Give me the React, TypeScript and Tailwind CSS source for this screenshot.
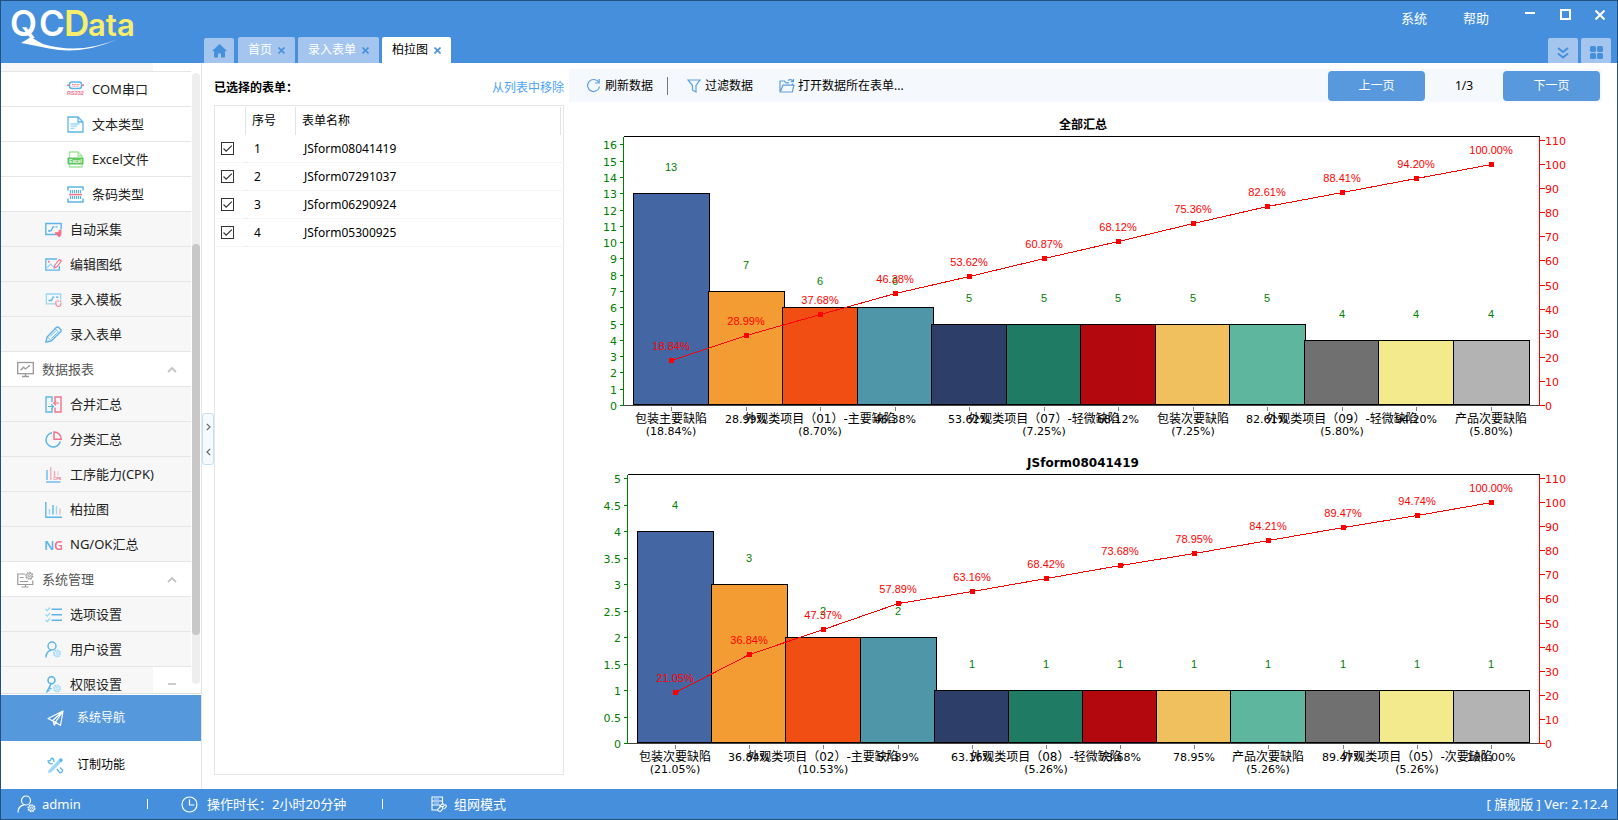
import React, { ReactNode } from "react";

const BLUE = "#5cb5ea";
const PINK = "#f4718c";
const LIGHT = "#9ad8fa";

function Icon({ size = 17, children }: { size?: number; children: ReactNode }) {
  return (
    <svg width={size} height={size} viewBox="0 0 17 17" fill="none" className="shrink-0" aria-hidden="true">
      {children}
    </svg>
  );
}

const Gear = ({ x, y, color }: { x: number; y: number; color: string }) => (
  <g stroke={color}>
    <circle cx={x} cy={y} r="3.4" strokeWidth="1.3" strokeDasharray="1.7 0.9" />
    <circle cx={x} cy={y} r="2.7" strokeWidth="0.8" />
    <circle cx={x} cy={y} r="1.1" strokeWidth="0.9" />
  </g>
);

const icons: Record<string, ReactNode> = {
  com: (
    <Icon>
      <rect x="2.500" y="1" width="12" height="6.500" rx="2.500" stroke={BLUE} strokeWidth="1.500" />
      <path d="M5 3.500h7.500M5.500 5.200h6.500" stroke={PINK} strokeDasharray="1 0.600" />
      <path d="M0 4.200h2M15 4.200h2" stroke={PINK} strokeWidth="1.500" />
      <text x="8.500" y="13.500" fontSize="5.500" fontWeight="700" textAnchor="middle" fill={PINK} fontFamily="Liberation Sans, sans-serif">RS232</text>
    </Icon>
  ),
  text: (
    <Icon>
      <path d="M1 1h10l5 5v10H1z" stroke={BLUE} strokeWidth="1.300" />
      <path d="M11 1v5h5" stroke={BLUE} strokeWidth="1.300" />
      <path d="M3.500 8h9M3.500 10.200h7M3.500 12.400h4" stroke={LIGHT} strokeWidth="1.300" />
    </Icon>
  ),
  excel: (
    <Icon>
      <path d="M2.500 7V1h8.500l4 4v2M2.500 13v3h12.500v-3" stroke="#a5e5a0" strokeWidth="1.300" />
      <path d="M11 1v4h4" stroke="#a5e5a0" strokeWidth="1.300" />
      <rect x="0.500" y="6.500" width="16" height="7" rx="0.800" fill="#5cc860" />
      <text x="8.500" y="11.800" fontSize="4.800" fontWeight="700" textAnchor="middle" fill="#fff" fontFamily="Liberation Sans, sans-serif">Excel</text>
    </Icon>
  ),
  barcode: (
    <Icon>
      <path d="M1 4.500V1h15v3.500M1 12.500V16h15v-3.500" stroke={BLUE} strokeWidth="1.500" />
      <path d="M3.500 4v3.200M5.500 4v3.200M7.500 4v3.200M9.500 4v3.200M11.500 4v3.200M13.500 4v3.200M3.500 10v3M5.500 10v3M7.500 10v3M9.500 10v3M11.500 10v3M13.500 10v3" stroke={BLUE} strokeWidth="1.200" />
      <path d="M2 8.600h13" stroke={PINK} strokeWidth="1.500" />
    </Icon>
  ),
  collect: (
    <Icon>
      <path d="M11 13.500H0.800V2.500h15.400v6" stroke={BLUE} strokeWidth="1.400" />
      <path d="M3.500 9.800h2.500l2-3.800h1.500M10.500 5.800h2" stroke={BLUE} strokeWidth="1.300" />
      <circle cx="4.200" cy="9.800" r="1.100" fill={BLUE} />
      <path d="M10.500 11.500h3l1-2.500 1.500 0 0 4.500-1.500 2.500-4-3z" fill={PINK} stroke={PINK} strokeWidth="0.800" />
    </Icon>
  ),
  edit: (
    <Icon>
      <path d="M12 3H0.800v11.200h13.500V10" stroke={BLUE} strokeWidth="1.300" />
      <path d="M2 12l3.500-4 3 3 2-1.500" stroke={LIGHT} strokeWidth="1.200" />
      <circle cx="3.800" cy="5.800" r="1" fill={PINK} />
      <path d="M9.500 9.500l4.800-6 2 1.500-4.500 6-2.600 1z" stroke={PINK} strokeWidth="1.100" />
    </Icon>
  ),
  template: (
    <Icon>
      <path d="M10.500 12.800H1.300V3h14.400v5.500" stroke={LIGHT} strokeWidth="1.300" />
      <path d="M3.500 9.500h3l1.500-3.300h1.500M11 6.200h2.500" stroke={BLUE} strokeWidth="1.300" />
      <path d="M11 11.500v-1.500M13 11V8.800M15.500 11V9.500M10.800 11.500c0 3 1.200 4 2.700 4s2.500-1 2.500-4" stroke={PINK} strokeWidth="1.200" opacity="0.800" />
    </Icon>
  ),
  pencil: (
    <Icon>
      <path d="M1 16l1-5L11.500 1.300h2L16 4v1.500L6 15z" stroke={BLUE} strokeWidth="1.400" />
      <path d="M2.500 11l3.500 3.500M10.500 3l4 4M5 10.500l6-6M6.500 12.500l6-6" stroke={BLUE} strokeWidth="0.900" />
    </Icon>
  ),
  report: (
    <Icon>
      <rect x="0.700" y="1.500" width="15.600" height="11.200" stroke="#999" strokeWidth="1.300" />
      <path d="M3.500 9.200l3-3 2 1.800 4.500-3.800M8.500 12.700v2.500M5 15.500h7" stroke="#999" strokeWidth="1.300" />
    </Icon>
  ),
  merge: (
    <Icon>
      <path d="M7 6V1H1v15h6v-4" stroke={BLUE} strokeWidth="1.400" />
      <path d="M10 5V1h6v15h-6v-4.500" stroke={PINK} strokeWidth="1.400" />
      <path d="M3 10.500h5M6.200 8.300l2.300 2.200-2.300 2.200" stroke={BLUE} strokeWidth="1.200" />
      <path d="M14 7H8.800M11 4.800L8.700 7 11 9.200" stroke={PINK} strokeWidth="1.200" />
    </Icon>
  ),
  pie: (
    <Icon>
      <path d="M7 1.800A7.200 7.200 0 1 0 15.300 10.500" stroke={BLUE} strokeWidth="1.500" />
      <path d="M9 0.900v7.300h7.200A7.300 7.300 0 0 0 9 0.900z" stroke={PINK} strokeWidth="1.500" />
    </Icon>
  ),
  cpk: (
    <Icon>
      <path d="M1 16h14.500" stroke={BLUE} strokeWidth="1.300" />
      <path d="M2 4v10" stroke={BLUE} strokeWidth="1.300" />
      <path d="M5.800 1v13M9.500 5v6" stroke={PINK} strokeWidth="1.300" opacity="0.600" />
      <path d="M13 5v5" stroke={PINK} opacity="0.400" />
      <text x="12.500" y="13.800" fontSize="4" fontWeight="700" textAnchor="middle" fill={PINK} fontFamily="Liberation Sans, sans-serif">CPK</text>
    </Icon>
  ),
  pareto: (
    <Icon>
      <path d="M0.800 1v15.200H17" stroke={BLUE} strokeWidth="1.400" />
      <path d="M4.500 8v5.500M11.500 5v8.500" stroke={LIGHT} strokeWidth="1.400" />
      <path d="M8 4v9.500" stroke={BLUE} strokeWidth="1.400" />
      <path d="M15 7.500v6" stroke={PINK} strokeWidth="1.400" opacity="0.500" />
    </Icon>
  ),
  ng: (
    <Icon>
      <g fontSize="13" fontWeight="600" fontFamily="Noto Sans, sans-serif">
        <text x="-1" y="13.500" fill={BLUE}>N</text>
        <text x="9" y="13.500" fill={PINK}>G</text>
      </g>
    </Icon>
  ),
  manage: (
    <Icon>
      <path d="M8 3H0.800v10.500h15V9.500M8.500 13.500v2M4.500 16h7M3 10.500h8M3 6.500h3.500" stroke="#999" strokeWidth="1.200" />
      <Gear x={12.3} y={4.8} color="#999" />
    </Icon>
  ),
  options: (
    <Icon>
      <path d="M6.500 3.300H17M6.500 8.700H17M6.500 14.200H17" stroke={BLUE} strokeWidth="1.600" />
      <path d="M0.500 3l1.700 1.600L5 1.500M0.500 8.500l1.700 1.600L5 7M0.500 14l1.700 1.600L5 12.500" stroke={LIGHT} strokeWidth="1.400" />
    </Icon>
  ),
  user: (
    <Icon>
      <circle cx="7" cy="5" r="4" stroke={BLUE} strokeWidth="1.400" />
      <path d="M1 16.500c0-4 2-6.500 5-7.300" stroke={BLUE} strokeWidth="1.400" />
      <Gear x={12} y={12.5} color={LIGHT} />
    </Icon>
  ),
  key: (
    <Icon>
      <circle cx="6.500" cy="4.200" r="3.500" stroke={BLUE} strokeWidth="1.600" />
      <path d="M6 8l-4.500 8.500M3.500 11.500l3 1.500M2.500 14l2 1" stroke={BLUE} strokeWidth="1.600" />
      <Gear x={12} y={12.5} color={LIGHT} />
    </Icon>
  ),
  plane: (
    <Icon>
      <path d="M16 1L1 8.500l4.500 2.300L16 1l-2.500 14.500-5-3.300L16 1M6 10.800l2.500 1.400-1 3.300M6 10.800l1.500 4.700" stroke="#fff" strokeWidth="1.200" strokeLinejoin="round" />
    </Icon>
  ),
  custom: (
    <Icon>
      <path d="M1.500 13.500L11.500 3l2.500 2.500L4 15.500l-3 .5z" fill={LIGHT} />
      <path d="M11.500 3l1.500-1.500c1-1 3.500 1 2.500 2.500L14 5.500z" fill={BLUE} />
      <path d="M4.500 1l-1 2.500L1 4c.5 2.500 3 3.500 4.800 2.500M4.500 1c1.800.5 2.700 2 2.300 4M10 12l2.500 3.500c1 .8 3.500-.5 3-2.500L13 10.500" stroke={BLUE} strokeWidth="1.300" />
    </Icon>
  ),
};

type NavRow = { icon: string; label: string; level: 0 | 1 | 2 };
const navRows: NavRow[] = [
  { icon: "com", label: "COM串口", level: 2 },
  { icon: "text", label: "文本类型", level: 2 },
  { icon: "excel", label: "Excel文件", level: 2 },
  { icon: "barcode", label: "条码类型", level: 2 },
  { icon: "collect", label: "自动采集", level: 1 },
  { icon: "edit", label: "编辑图纸", level: 1 },
  { icon: "template", label: "录入模板", level: 1 },
  { icon: "pencil", label: "录入表单", level: 1 },
  { icon: "report", label: "数据报表", level: 0 },
  { icon: "merge", label: "合并汇总", level: 1 },
  { icon: "pie", label: "分类汇总", level: 1 },
  { icon: "cpk", label: "工序能力(CPK)", level: 1 },
  { icon: "pareto", label: "柏拉图", level: 1 },
  { icon: "ng", label: "NG/OK汇总", level: 1 },
  { icon: "manage", label: "系统管理", level: 0 },
  { icon: "options", label: "选项设置", level: 1 },
  { icon: "user", label: "用户设置", level: 1 },
  { icon: "key", label: "权限设置", level: 1 },
];

const levelClass = {
  0: "bg-white pl-4 gap-2 text-[#555]",
  1: "bg-[#f7f7f7] pl-[44px] gap-2 text-[#222]",
  2: "bg-white pl-[66px] gap-2 text-[#222]",
};

function Sidebar() {
  return (
    <aside className="flex w-[201px] shrink-0 flex-col border-r border-[#e6e6e6] bg-white">
      <div className="flex min-h-0 flex-1 justify-between border-b border-[#e0e0e0]">
        <nav className="relative w-[190px] overflow-hidden">
          <div className="h-[9px] border-b border-[#e6e6e6]">
            <div className="h-2 w-[152px] bg-[#f7f7f7]" />
          </div>
          {navRows.map((row) => (
            <button
              key={row.label}
              type="button"
              className={`flex h-[35px] w-full items-center border-b border-[#e6e6e6] pt-px text-[13px] ${levelClass[row.level]}`}
            >
              {icons[row.icon]}
              <span>{row.label}</span>
              {row.level === 0 && (
                <svg width="10" height="7" viewBox="0 0 10 7" fill="none" className="mr-[14px] ml-auto" aria-hidden="true">
                  <path d="M1 6l4-4 4 4" stroke="#c4c4c4" strokeWidth="1.800" />
                </svg>
              )}
            </button>
          ))}
          <div className="absolute right-0 bottom-0 flex h-[26px] w-[38px] justify-center bg-white pt-4">
            <span className="h-[2px] w-2 bg-[#ccc]" />
          </div>
        </nav>
        <div className="mt-[10px] mr-[1px] mb-[9px] flex w-2 flex-col rounded-full bg-[#eeeeee]">
          <div className="h-[28%]" />
          <div className="h-[64%] rounded-full bg-[#c8c8c8]" />
        </div>
      </div>
      <button type="button" className="mt-px flex h-[46px] items-center gap-[13px] bg-[#5598dc] pl-[46px] text-xs text-white">
        {icons.plane}
        系统导航
      </button>
      <button type="button" className="flex h-12 items-center gap-[13px] pl-[46px] text-xs text-black">
        {icons.custom}
        订制功能
      </button>
    </aside>
  );
}

function Logo() {
  return (
    <svg width="140" height="54" viewBox="0 0 140 54" role="img" aria-label="QCData" className="shrink-0">
      <g fontFamily="Inter, Roboto, sans-serif" fontWeight="600">
        <g fill="#fff" fontSize="35">
          <text x="9" y="35">Q</text>
          <text x="38" y="35">C</text>
        </g>
        <g fill="#f8ee6c">
          <text x="63" y="35" fontSize="35">D</text>
          <text x="87" y="35" fontSize="31">ata</text>
        </g>
      </g>
      <path d="M20 42L30 36Q36 40 42 43Q78 54 117 38Q82 54 48 47.500Q30 43.500 20 42z" fill="#fff" />
    </svg>
  );
}

function CloseX() {
  return (
    <svg width="7" height="7" viewBox="0 0 7 7" fill="none" aria-hidden="true">
      <path d="M0.500 0.500l6 6M6.500 0.500l-6 6" stroke="#4a90dc" strokeWidth="1.600" />
    </svg>
  );
}

function Tab({ label, active = false }: { label: string; active?: boolean }) {
  return (
    <div
      className={`flex h-[26px] items-center gap-[6px] rounded-t-[2px] px-[10px] text-xs ${
        active ? "bg-white text-black" : "bg-[#a4c6ee] text-white"
      }`}
    >
      <button type="button">{label}</button>
      <button type="button" aria-label={`关闭${label}`}>
        <CloseX />
      </button>
    </div>
  );
}

function Header() {
  return (
    <header className="flex h-[62px] shrink-0 items-stretch bg-[#468fdc]">
      <div className="w-[203px] shrink-0">
        <Logo />
      </div>
      <div className="flex items-end gap-[3px]">
        <button type="button" aria-label="主页" className="mr-px flex h-[25px] w-[30px] items-center justify-center rounded-t-[2px] bg-[#a4c6ee]">
          <svg width="15" height="14" viewBox="0 0 15 14" aria-hidden="true">
            <path d="M7.500 0L0 7h2v5.500q0 1 1 1h3V9.500h3v4h3q1 0 1-1V7h2z" fill="#468fdc" />
          </svg>
        </button>
        <Tab label="首页" />
        <Tab label="录入表单" />
        <Tab label="柏拉图" active />
      </div>
      <div className="ml-auto flex flex-col justify-between">
        <div className="flex items-center pt-2 pr-3 text-[13px] text-white">
          <button type="button" className="mr-9">系统</button>
          <button type="button" className="mr-9">帮助</button>
          <button type="button" aria-label="最小化" className="mr-[25px] pb-3">
            <svg width="10" height="2" viewBox="0 0 10 2" className="block" aria-hidden="true"><rect width="10" height="2" fill="#fff" /></svg>
          </button>
          <button type="button" aria-label="最大化" className="mr-6 pb-2">
            <svg width="11" height="11" viewBox="0 0 11 11" fill="none" aria-hidden="true"><rect x="1" y="1" width="9" height="9" stroke="#fff" strokeWidth="2" /></svg>
          </button>
          <button type="button" aria-label="关闭" className="pb-2">
            <svg width="10" height="10" viewBox="0 0 10 10" aria-hidden="true"><path d="M0.500 0.500l9 9M9.500 0.500l-9 9" stroke="#fff" strokeWidth="2" /></svg>
          </button>
        </div>
        <div className="flex justify-end gap-[3px] pr-[6px]">
          <button type="button" aria-label="展开" className="flex h-[25px] w-[30px] items-center justify-center rounded-t-[2px] bg-[#a4c6ee]">
            <svg width="12" height="12" viewBox="0 0 12 12" fill="none" className="mt-1" aria-hidden="true">
              <path d="M1 1l5 4 5-4M1 6.500l5 4 5-4" stroke="#468fdc" strokeWidth="2" />
            </svg>
          </button>
          <button type="button" aria-label="网格" className="flex h-[25px] w-[30px] items-center justify-center rounded-t-[2px] bg-[#a4c6ee]">
            <svg width="13" height="13" viewBox="0 0 13 13" fill="#468fdc" className="mt-1" aria-hidden="true">
              <rect width="6" height="6" rx="1.500" /><rect x="7" width="6" height="6" rx="1.500" />
              <rect y="7" width="6" height="6" rx="1.500" /><rect x="7" y="7" width="6" height="6" rx="1.500" />
            </svg>
          </button>
        </div>
      </div>
    </header>
  );
}

const forms = ["JSform08041419", "JSform07291037", "JSform06290924", "JSform05300925"];

function FormPanel() {
  return (
    <section className="relative flex w-[367px] shrink-0 flex-col pr-[5px] pb-[14px] pl-3">
      <div className="flex h-[42px] shrink-0 items-center justify-between pt-2 text-xs">
        <h2 className="font-bold text-black">已选择的表单：</h2>
        <a href="#remove" className="text-[#4ba3f7]">从列表中移除</a>
      </div>
      <div className="flex-1 border border-[#e6e6e6] px-[2px] pt-px">
        <table className="w-full table-fixed border-separate border-spacing-0 text-left text-xs text-black">
          <thead>
            <tr className="h-7">
              <th className="w-[29px] border-r border-[#e3e3e3]" aria-label="选择" />
              <th className="w-[50px] border-r border-[#e3e3e3] pl-[6px] font-normal">序号</th>
              <th className="border-r border-[#e3e3e3] pl-[6px] font-normal">表单名称</th>
            </tr>
          </thead>
          <tbody>
            {forms.map((name, i) => (
              <tr key={name} className="h-7">
                <td className="border-b border-dotted border-[#ebebeb] pl-1">
                  <label className="grid h-[13px] w-[13px]">
                    <input
                      type="checkbox"
                      defaultChecked
                      aria-label={name}
                      className="peer m-0 h-[13px] w-[13px] appearance-none border border-[#333] bg-white [grid-area:1/1]"
                    />
                    <svg width="13" height="13" viewBox="0 0 13 13" fill="none" className="pointer-events-none hidden peer-checked:block [grid-area:1/1]" aria-hidden="true">
                      <path d="M2.500 6.500L5.200 9.200L10.800 3.600" stroke="#333" strokeWidth="1.200" />
                    </svg>
                  </label>
                </td>
                <td className="border-b border-dotted border-[#ebebeb] pl-2">{i + 1}</td>
                <td className="border-b border-dotted border-[#ebebeb] pl-2">{name}</td>
              </tr>
            ))}
          </tbody>
        </table>
      </div>
      <button
        type="button"
        aria-label="折叠面板"
        className="absolute top-[350px] left-0 flex h-[52px] w-3 flex-col items-center justify-around rounded-[3px] border border-[#c3e1f6] bg-[#f5faff]"
      >
        <svg width="5" height="8" viewBox="0 0 5 8" fill="none" aria-hidden="true"><path d="M0.800 0.800L4 4L0.800 7.200" stroke="#666" strokeWidth="1.200" /></svg>
        <svg width="5" height="8" viewBox="0 0 5 8" fill="none" aria-hidden="true"><path d="M4.200 0.800L1 4l3.200 3.200" stroke="#666" strokeWidth="1.200" /></svg>
      </button>
    </section>
  );
}

function Toolbar() {
  return (
    <div className="mt-[6px] mr-[15px] flex h-[33px] items-center bg-[#f5f9fe] pr-[2px] pl-[17px] text-xs text-black">
      <button type="button" className="flex items-center gap-1">
        <svg width="15" height="15" viewBox="0 0 15 15" fill="none" aria-hidden="true">
          <path d="M12.600 4.200A6 6 0 1 0 13.500 8.500" stroke="#5a9fe0" strokeWidth="1.200" />
          <path d="M13.200 1v4H9" stroke="#5a9fe0" strokeWidth="1.200" />
        </svg>
        刷新数据
      </button>
      <span className="ml-[14px] h-[18px] w-px bg-[#777]" />
      <button type="button" className="ml-[19px] flex items-center gap-1">
        <svg width="14" height="14" viewBox="0 0 14 14" fill="none" aria-hidden="true">
          <path d="M1 1h12L9 6.500V13L5.500 11V6.500z" stroke="#5a9fe0" strokeWidth="1.200" />
        </svg>
        过滤数据
      </button>
      <button type="button" className="ml-[26px] flex items-center gap-[3px]">
        <svg width="16" height="15" viewBox="0 0 16 15" fill="none" aria-hidden="true">
          <path d="M1 13.500V3h4.500l1.500 1.800h3M1.200 14L4 7.200h11L13.300 14zM13.500 7V5.500M9 2.500c2-1.500 4-1 5 .8M14.500 1v2.700h-2.700" stroke="#5a9fe0" strokeWidth="1.200" />
        </svg>
        打开数据所在表单...
      </button>
      <button type="button" className="ml-auto h-[30px] w-[97px] rounded-[4px] bg-[#5898dc] text-white">上一页</button>
      <span className="w-[78px] text-center">1/3</span>
      <button type="button" className="h-[30px] w-[97px] rounded-[4px] bg-[#5898dc] text-white">下一页</button>
    </div>
  );
}

const barColors = [
  "#4466a2", "#f39c34", "#f14e14", "#4f97a8", "#2d3f68", "#1f7b63",
  "#b3080e", "#f1c05e", "#5db69d", "#707070", "#f3e98d", "#b3b3b3",
];

type Row = { value: number; cumulative: number; name?: string; share?: string };
type ChartProps = { title: string; left: number; first: number; max: number; step: number; unit: number; rows: Row[] };

const LATIN = "DejaVu Sans, Noto Sans CJK SC, sans-serif";
const PLAIN = "Liberation Sans, sans-serif";
const RIGHT = 970;
const TOP = 30;
const BASE = 299;
const LAST = 922;

function ParetoChart({ title, left, first, max, step, unit, rows }: ChartProps) {
  const ticks = Array.from({ length: Math.round(max / step) + 1 }, (_, i) => i * step);
  const percents = Array.from({ length: 12 }, (_, i) => i * 10);
  const gap = (LAST - first) / (rows.length - 1);
  const centre = (i: number) => Math.round(first + gap * i);
  const barTop = (v: number) => Math.round(BASE - v * unit);
  const pointY = (p: number) => Math.round(BASE - p * 2.41);
  return (
    <svg viewBox="0 0 1048 338" className="block h-auto w-full" role="img" aria-label={title}>
      <g shapeRendering="crispEdges" transform="translate(0.5 0.5)">
        <path d={`M${left} ${TOP}H${RIGHT}`} stroke="#000" />
        <path d={`M${left} ${BASE}H${RIGHT}`} stroke="#444" />
        {rows.map((r, i) => (
          <g key={i}>
            <rect x={centre(i) - 38} y={barTop(r.value)} width="76" height={BASE - 1 - barTop(r.value)} fill={barColors[i]} stroke="#000" />
            <path d={`M${centre(i)} ${BASE + 1}v4`} stroke="#808080" />
          </g>
        ))}
        <path d={`M${left} ${TOP}V${BASE}`} stroke="#008000" />
        <path d={`M${RIGHT} ${TOP}V${BASE}`} stroke="#f00" />
        {ticks.map((t) => <path key={t} d={`M${left - 4} ${barTop(t)}h4`} stroke="#008000" />)}
        {percents.map((p) => <path key={p} d={`M${RIGHT} ${pointY(p)}h5`} stroke="#f00" />)}
      </g>
      <g fontFamily={LATIN} fontSize="11" fill="#008000" textAnchor="end">
        {ticks.map((t) => <text key={t} x={left - 6} y={barTop(t) + 5}>{t}</text>)}
      </g>
      <g fontFamily={LATIN} fontSize="11" fill="#f00">
        {percents.map((p) => <text key={p} x={RIGHT + 6} y={pointY(p) + 5}>{p}</text>)}
      </g>
      <g fontFamily={PLAIN} fontSize="11" fill="#008000" textAnchor="middle">
        {rows.map((r, i) => <text key={i} x={centre(i)} y={barTop(r.value) - 22}>{r.value}</text>)}
      </g>
      <g shapeRendering="crispEdges" transform="translate(0.5 0.5)">
        <polyline points={rows.map((r, i) => `${centre(i)},${pointY(r.cumulative)}`).join(" ")} fill="none" stroke="#f00" />
        {rows.map((r, i) => (
          <rect key={i} x={centre(i) - 2.5} y={pointY(r.cumulative) - 2.5} width="5" height="5" fill="#f00" />
        ))}
      </g>
      <g fontFamily={PLAIN} fontSize="11" fill="#f00" textAnchor="middle">
        {rows.map((r, i) => <text key={i} x={centre(i)} y={pointY(r.cumulative) - 10}>{r.cumulative.toFixed(2)}%</text>)}
      </g>
      <g fontFamily={LATIN} fontSize="11" fill="#000" textAnchor="middle">
        {rows.map((r, i) =>
          r.name ? (
            <g key={i}>
              <text x={centre(i)} y={BASE + 18} fontSize="12">{r.name}</text>
              <text x={centre(i)} y={BASE + 30}>({r.share}%)</text>
            </g>
          ) : (
            <text key={i} x={centre(i)} y={BASE + 18}>{r.cumulative.toFixed(2)}%</text>
          ),
        )}
      </g>
      <text x="514" y="23" fontFamily={LATIN} fontSize="12" fontWeight="700" textAnchor="middle">{title}</text>
    </svg>
  );
}

const summaryRows: Row[] = [
  { value: 13, cumulative: 18.84, name: "包装主要缺陷", share: "18.84" },
  { value: 7, cumulative: 28.99 },
  { value: 6, cumulative: 37.68, name: "外观类项目（01）-主要缺陷", share: "8.70" },
  { value: 6, cumulative: 46.38 },
  { value: 5, cumulative: 53.62 },
  { value: 5, cumulative: 60.87, name: "外观类项目（07）-轻微缺陷", share: "7.25" },
  { value: 5, cumulative: 68.12 },
  { value: 5, cumulative: 75.36, name: "包装次要缺陷", share: "7.25" },
  { value: 5, cumulative: 82.61 },
  { value: 4, cumulative: 88.41, name: "外观类项目（09）-轻微缺陷", share: "5.80" },
  { value: 4, cumulative: 94.2 },
  { value: 4, cumulative: 100, name: "产品次要缺陷", share: "5.80" },
];

const formRows: Row[] = [
  { value: 4, cumulative: 21.05, name: "包装次要缺陷", share: "21.05" },
  { value: 3, cumulative: 36.84 },
  { value: 2, cumulative: 47.37, name: "外观类项目（02）-主要缺陷", share: "10.53" },
  { value: 2, cumulative: 57.89 },
  { value: 1, cumulative: 63.16 },
  { value: 1, cumulative: 68.42, name: "外观类项目（08）-轻微缺陷", share: "5.26" },
  { value: 1, cumulative: 73.68 },
  { value: 1, cumulative: 78.95 },
  { value: 1, cumulative: 84.21, name: "产品次要缺陷", share: "5.26" },
  { value: 1, cumulative: 89.47 },
  { value: 1, cumulative: 94.74, name: "外观类项目（05）-次要缺陷", share: "5.26" },
  { value: 1, cumulative: 100 },
];

function StatusBar() {
  return (
    <footer className="flex h-[30px] shrink-0 items-center bg-[#468fdc] pr-[9px] pl-4 text-[13px] text-white">
      <svg width="20" height="18" viewBox="0 0 20 18" fill="none" aria-hidden="true">
        <circle cx="9" cy="5.500" r="4.500" stroke="#fff" strokeWidth="1.200" />
        <path d="M1 17.500c0-4.500 2.500-7 6.500-7.800" stroke="#fff" strokeWidth="1.200" />
        <Gear x={14.5} y={13.2} color="#fff" />
      </svg>
      <span className="ml-[5px] w-[105px]">admin</span>
      <span className="h-[10px] w-px bg-white" />
      <svg width="17" height="17" viewBox="0 0 17 17" fill="none" className="ml-[33px]" aria-hidden="true">
        <circle cx="8.500" cy="8.500" r="7.500" stroke="#fff" strokeWidth="1.200" />
        <path d="M8.500 3.500v5.500h5" stroke="#fff" strokeWidth="1.200" />
      </svg>
      <span className="ml-[9px] w-[175px]">操作时长：2小时20分钟</span>
      <span className="h-[10px] w-px bg-white" />
      <svg width="16" height="17" viewBox="0 0 16 17" fill="none" className="ml-12" aria-hidden="true">
        <path d="M7 14H1V1h10.500v6M1 5h10.500M1 9h8" stroke="#fff" strokeWidth="1.100" />
        <path d="M3 3h5M3 7h5" stroke="#fff" strokeWidth="0.700" />
        <path d="M8.500 10.500l3-3 1.500 1M7.500 15l-1-1.500 3-3h2l.5 2-2.500 3zM11 12l2.500-3h1.500l.3 1.700-2 2.300" stroke="#fff" strokeWidth="1.100" />
      </svg>
      <span className="ml-[7px]">组网模式</span>
      <span className="ml-auto">[ 旗舰版 ] Ver: 2.12.4</span>
    </footer>
  );
}

export default function App() {
  return (
    <div className="flex h-screen min-h-[600px] flex-col border border-[#24507f] bg-white font-['Noto_Sans','Noto_Sans_CJK_SC',sans-serif] leading-tight whitespace-nowrap">
      <Header />
      <div className="flex min-h-0 flex-1">
        <Sidebar />
        <FormPanel />
        <main className="flex min-w-0 flex-1 flex-col overflow-hidden">
          <Toolbar />
          <div className="pt-1">
            <ParetoChart title="全部汇总" left={54} first={102} max={16} step={1} unit={16.29} rows={summaryRows} />
            <ParetoChart title="JSform08041419" left={58} first={106} max={5} step={0.5} unit={53} rows={formRows} />
          </div>
        </main>
      </div>
      <StatusBar />
    </div>
  );
}
